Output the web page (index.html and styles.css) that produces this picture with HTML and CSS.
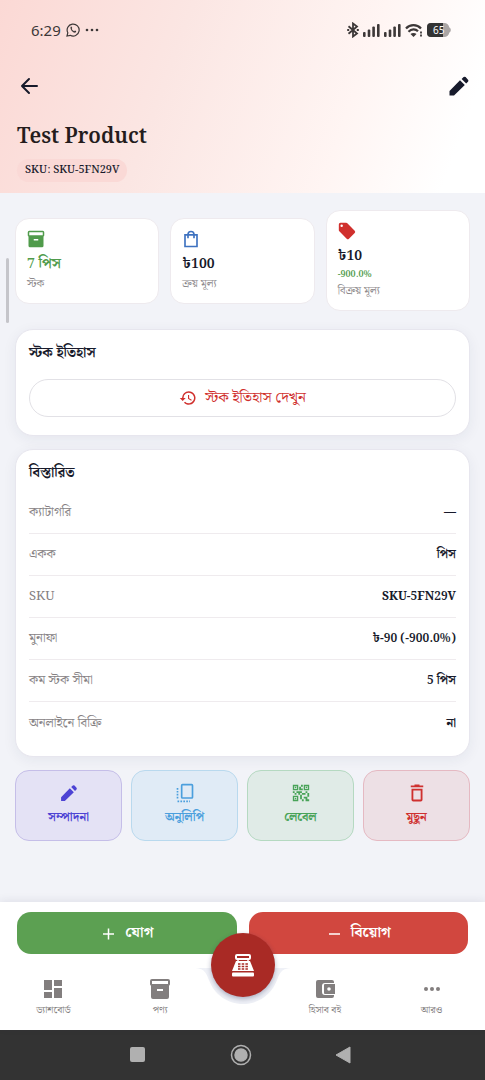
FILE: index.html
```html
<!DOCTYPE html>
<html lang="bn">
<head>
<meta charset="utf-8">
<meta name="viewport" content="width=device-width, initial-scale=1">
<title>Test Product</title>
<link rel="stylesheet" href="styles.css">
</head>
<body>
<div class="screen">
  <header class="header">
    <div class="status">
      <div class="status-group">
        <span class="clock">6:29</span>
        <svg class="i14" viewBox="0 0 14 14" fill="none" stroke="currentColor" stroke-width="1.2"><path d="M1 13l.8-3.2A6 6 0 1 1 4.200 12.300z"/><path d="M4.500 4.200c.2-.8 1.100-.8 1.400 0l.3.8-.5.9c.5 1 1.300 1.800 2.400 2.300l.9-.6 1 .5c.5.6-.2 1.500-1.100 1.600C6.700 9.500 4.300 6.800 4.500 4.200z" fill="currentColor" stroke="none"/></svg>
        <svg class="i14" viewBox="0 0 14 14" fill="currentColor"><circle cx="2" cy="7" r="1.300"/><circle cx="7" cy="7" r="1.300"/><circle cx="12" cy="7" r="1.300"/></svg>
      </div>
      <div class="status-group status-right">
        <svg width="12" height="16" viewBox="0 0 12 16" fill="none" stroke="currentColor" stroke-width="1.800"><path d="M1.500 4.200l8.500 7.300L6 14.500v-13l4 3-8.500 7.300M.2 8h2M9.800 8h2"/></svg>
        <svg width="17" height="14" viewBox="0 0 17 14" fill="currentColor"><rect y="9" width="2.600" height="5" rx="1"/><rect x="4.700" y="6.500" width="2.600" height="7.500" rx="1"/><rect x="9.300" y="3.500" width="2.600" height="10.500" rx="1"/><rect x="14" y="1" width="2.600" height="13" rx="1"/></svg>
        <svg width="17" height="14" viewBox="0 0 17 14" fill="currentColor"><rect y="9" width="2.600" height="5" rx="1"/><rect x="4.700" y="6.500" width="2.600" height="7.500" rx="1"/><rect x="9.300" y="3.500" width="2.600" height="10.500" rx="1"/><rect x="14" y="1" width="2.600" height="13" rx="1"/></svg>
        <svg width="18" height="14" viewBox="0 0 18 14" fill="none" stroke="currentColor" stroke-width="2.200"><path d="M1 5.500c4-4.500 11-4.500 15 0M3.500 8.700c3-3 7-3 9.500-.4"/><path d="M5.500 11c1.500-1.500 4.500-1.500 6 0l-3 3z" fill="currentColor" stroke="none"/><path d="M16 8.500v2M16 11.500v2" stroke-width="1.800"/></svg>
        <svg width="24" height="14" viewBox="0 0 24 14"><path d="M4 0h13c3 0 5 2 5.300 4.500 2 .5 2 4.500 0 5C22 12 20 14 17 14H4a4 4 0 0 1-4-4V4a4 4 0 0 1 4-4z" fill="#aba6a5"/><path d="M4 0h12v14H4a4 4 0 0 1-4-4V4a4 4 0 0 1 4-4z" fill="#333"/><text class="battery" x="6" y="11">65</text></svg>
      </div>
    </div>
    <div class="toolbar">
      <button class="icon-button" aria-label="Back"><svg class="i24" viewBox="0 0 24 24" fill="none" stroke="currentColor" stroke-width="2" stroke-linecap="round" stroke-linejoin="round"><path d="M20 12H5M12 5l-7 7 7 7"/></svg></button>
      <button class="icon-button" aria-label="Edit"><svg class="i24" viewBox="0 0 24 24" fill="currentColor"><path d="M2.500 17V21.500H7L17.800 11 13 6.200zM21 7.700a1.500 1.500 0 0 0 0-2L18.600 3.100a1.500 1.500 0 0 0-2 0L14.600 4.900l4.600 4.600z"/></svg></button>
    </div>
    <h1 class="title">Test Product</h1>
    <span class="sku">SKU: SKU-5FN29V</span>
  </header>

  <main class="content">
    <section class="stats">
      <article class="stat">
        <svg class="i18 green" viewBox="0 0 24 24" fill="currentColor"><path fill-rule="evenodd" d="M3 1h18a2 2 0 0 1 2 2v4a2 2 0 0 1-1 1.700V21a2 2 0 0 1-2 2H4a2 2 0 0 1-2-2V8.700A2 2 0 0 1 1 7V3a2 2 0 0 1 2-2zm0 2v4h18V3zM9 12v2h6v-2z"/></svg>
        <strong class="stat-value green">7 পিস</strong>
        <span class="stat-label">স্টক</span>
      </article>
      <article class="stat">
        <svg class="i18 blue" viewBox="0 0 24 24" fill="none" stroke="currentColor" stroke-width="2.200"><path d="M4 6.500h16V22H4zM8 11V6a4 4 0 0 1 8 0v5"/></svg>
        <strong class="stat-value">৳100</strong>
        <span class="stat-label">ক্রয় মূল্য</span>
      </article>
      <article class="stat">
        <svg class="i18 red" viewBox="1 1 22 22" fill="currentColor"><path d="M21.400 11.600l-9-9A2 2 0 0 0 11 2H4a2 2 0 0 0-2 2v7c0 .5.200 1 .600 1.400l9 9a2 2 0 0 0 2.800 0l7-7a2 2 0 0 0 0-2.800zM5.500 7a1.500 1.500 0 1 1 0-3 1.500 1.500 0 0 1 0 3z"/></svg>
        <strong class="stat-value">৳10</strong>
        <span class="stat-change">-900.0%</span>
        <span class="stat-label">বিক্রয় মূল্য</span>
      </article>
    </section>

    <section class="card">
      <h2 class="card-title">স্টক ইতিহাস</h2>
      <button class="history"><svg class="i18" viewBox="0 0 24 24" fill="currentColor"><path d="M13 3a9 9 0 0 0-9 9H1l3.900 3.900L9 12H6a7 7 0 1 1 2.060 4.940l-1.420 1.420A9 9 0 1 0 13 3zm-1 5v5l4.280 2.540.720-1.210-3.500-2.080V8z"/></svg><span>স্টক ইতিহাস দেখুন</span></button>
    </section>

    <section class="card card-details">
      <h2 class="card-title">বিস্তারিত</h2>
      <dl class="details">
        <div class="row"><dt>ক্যাটাগরি</dt><dd>—</dd></div>
        <div class="row"><dt>একক</dt><dd>পিস</dd></div>
        <div class="row"><dt>SKU</dt><dd>SKU-5FN29V</dd></div>
        <div class="row"><dt>মুনাফা</dt><dd>৳-90 (-900.0%)</dd></div>
        <div class="row"><dt>কম স্টক সীমা</dt><dd>5 পিস</dd></div>
        <div class="row"><dt>অনলাইনে বিক্রি</dt><dd>না</dd></div>
      </dl>
    </section>

    <section class="actions">
      <button class="action edit"><svg class="i20" viewBox="0 0 24 24" fill="currentColor"><path d="M2.500 17V21.500H7L17.800 11 13 6.200zM21 7.700a1.500 1.500 0 0 0 0-2L18.600 3.100a1.500 1.500 0 0 0-2 0L14.600 4.900l4.600 4.600z"/></svg>সম্পাদনা</button>
      <button class="action copy"><svg class="i20" viewBox="0 0 24 24" fill="none" stroke="currentColor" stroke-width="2"><rect x="8" y="2" width="13" height="16" rx="1"/><path d="M3 6v14M3 22h15" stroke-dasharray="2 1.500"/></svg>অনুলিপি</button>
      <button class="action label"><svg class="i20" viewBox="1 1 22 22" fill="currentColor"><path d="M15 21h-2v-2h2v2zm-2-7h-2v5h2v-5zm8-2h-2v4h2v-4zm-2-2h-2v2h2v-2zM7 12H5v2h2v-2zm-2-2H3v2h2v-2zm7-5h2V3h-2v2zm-7.500-.5v3h3v-3h-3zM9 9H3V3h6v6zm-4.500 7.500v3h3v-3h-3zM9 21H3v-6h6v6zm7.500-16.500v3h3v-3h-3zM21 9h-6V3h6v6zm-2 10v-3h-4v2h2v3h4v-2h-2zm-2-7h-4v2h4v-2zm-4-2H7v2h2v2h2v-2h2v-2zm1-1V7h-2V5h-2v4h4zM6.750 5.250h-1.500v1.500h1.500v-1.500zm0 12h-1.500v1.500h1.500v-1.500zm12-12h-1.500v1.500h1.500v-1.500z"/></svg>লেবেল</button>
      <button class="action delete"><svg class="i20" viewBox="0 0 24 24" fill="none" stroke="currentColor" stroke-width="2.200"><path d="M6.500 8h11v12a1 1 0 0 1-1 1h-9a1 1 0 0 1-1-1zM4.500 4h15M9 3h6"/></svg>মুছুন</button>
    </section>
    <div class="scrollbar"></div>
  </main>

  <footer class="bottom">
    <div class="stock-buttons">
      <button class="stock add"><svg class="i16" viewBox="0 0 16 16" fill="none" stroke="currentColor" stroke-width="1.500"><path d="M3 9h11M8.500 3.500v11"/></svg>যোগ</button>
      <button class="stock remove"><svg class="i16" viewBox="0 0 16 16" fill="none" stroke="currentColor" stroke-width="1.500"><path d="M3 9h11"/></svg>বিয়োগ</button>
    </div>
    <nav class="tabs">
      <a class="tab" href="#dashboard"><svg class="i24" viewBox="0 0 24 24" fill="currentColor"><path d="M3 13h8V3H3zM3 21h8v-6H3zM13 21h8V11h-8zM13 3v6h8V3z"/></svg>ড্যাশবোর্ড</a>
      <a class="tab" href="#products"><svg class="i24" viewBox="0 0 24 24" fill="currentColor"><path fill-rule="evenodd" d="M4 2h16a2 2 0 0 1 2 2v3a2 2 0 0 1-1 1.700V20a2 2 0 0 1-2 2H5a2 2 0 0 1-2-2V8.700A2 2 0 0 1 2 7V4a2 2 0 0 1 2-2zm0 2v3h16V4zM9 12v2h6v-2z"/></svg>পণ্য</a>
      <span></span>
      <a class="tab" href="#ledger"><svg class="i24" viewBox="0 0 24 24" fill="currentColor"><path fill-rule="evenodd" d="M5 3h14a2 2 0 0 1 2 2v1h-9a3 3 0 0 0-3 3v6a3 3 0 0 0 3 3h9v1a2 2 0 0 1-2 2H5a2 2 0 0 1-2-2V5a2 2 0 0 1 2-2zM12 7h10v10H12a1 1 0 0 1-1-1V8a1 1 0 0 1 1-1zm4 3.200a1.800 1.800 0 1 0 0 3.600 1.800 1.800 0 0 0 0-3.600z"/></svg>হিসাব বই</a>
      <a class="tab" href="#more"><svg class="i24" viewBox="0 0 24 24" fill="currentColor"><circle cx="6" cy="12" r="2"/><circle cx="12" cy="12" r="2"/><circle cx="18" cy="12" r="2"/></svg>আরও</a>
    </nav>
    <svg class="notch" viewBox="0 0 100 42"><path d="M0 4c12 0 13 5 16 12 5 14 18 24 34 24s29-10 34-24c3-7 4-12 16-12z"/></svg>
    <button class="fab" aria-label="POS"><svg class="i28" viewBox="0 0 28 28" fill="none" stroke="currentColor" stroke-width="2"><rect x="7" y="4" width="14" height="4" rx="1"/><path d="M9 8v3M19 8v3" stroke-width="1.500"/><path d="M7 10h14l4 10H3z" fill="currentColor" stroke="none"/><path d="M9 13h10M9 15.500h10M9 18h10" stroke="#a92a25" stroke-width="1.500" stroke-dasharray="2.500 1.200"/><rect x="3" y="21.500" width="22" height="4" rx="1" fill="currentColor" stroke="none"/></svg></button>
  </footer>

  <div class="system">
    <button class="system-button" aria-label="Recents"><svg class="i24" viewBox="0 0 24 24" fill="currentColor"><rect x="4" y="4" width="15" height="15" rx="2"/></svg></button>
    <button class="system-button" aria-label="Home"><svg class="i24" viewBox="0 0 24 24" fill="none" stroke="currentColor" stroke-width="1.500"><circle cx="12" cy="12" r="9.500"/><circle cx="12" cy="12" r="6" fill="currentColor"/></svg></button>
    <button class="system-button" aria-label="Back"><svg class="i24" viewBox="0 0 24 24" fill="currentColor"><path d="M4 12L18 4v16z" stroke="currentColor" stroke-linejoin="round"/></svg></button>
  </div>
</div>
</body>
</html>
```
FILE: styles.css
```css
* { box-sizing: border-box; }
body {
  margin: 0;
  background: #f2f3f8;
  color: #171a2b;
  font-family: "Noto Serif Bengali", "Noto Serif", "DejaVu Serif Condensed", "Liberation Serif", serif;
}
button { font: inherit; color: inherit; border: 0; padding: 0; background: none; }
h1, h2, dl, dd { margin: 0; }
svg { display: block; flex: none; }
.i14 { width: 14px; height: 14px; }
.i16 { width: 16px; height: 16px; }
.i18 { width: 18px; height: 18px; }
.i20 { width: 20px; height: 20px; }
.i24 { width: 24px; height: 24px; }
.i28 { width: 28px; height: 28px; }
.green { color: #509b4b; }
.blue { color: #3e72c0; }
.red { color: #d0302d; }
.screen { min-height: 100vh; display: flex; flex-direction: column; }

.header {
  padding: 20px 17px 11px;
  background: linear-gradient(110deg, #fbd9d5 0%, #fbe6e3 35%, #fff5f3 70%, #ffffff 92%);
}
.status { display: flex; justify-content: space-between; height: 20px; padding: 0 17px 0 14px; color: #3d3838; }
.status-group { display: flex; align-items: center; gap: 5px; }
.status-right { gap: 4px; }
.clock { font: 15px/18px "Noto Sans", sans-serif; }
.battery { font: 10px "Noto Sans", sans-serif; fill: #ffffff; }
.toolbar { display: flex; justify-content: space-between; margin: 34px -3px 0 0; }
.icon-button { height: 24px; }
.title { margin-top: 22px; font-size: 21px; line-height: 34px; font-weight: 600; color: #241c1c; }
.sku {
  display: inline-block;
  margin-top: 5px;
  padding: 0 8px;
  border-radius: 12px;
  background: #fad9d6;
  font-size: 11px;
  line-height: 23px;
  font-weight: 500;
}

.content { position: relative; flex: 1; display: flex; flex-direction: column; gap: 13px; padding: 17px 15px; }
.stats { display: grid; grid-template-columns: repeat(3, 1fr); gap: 11px; align-items: center; margin-bottom: 5px; }
.stat {
  display: flex;
  flex-direction: column;
  padding: 11px 11px 9px;
  border: 1px solid #eeeaee;
  border-radius: 14px;
  background: #ffffff;
}
.stat-value { margin-top: 5px; font-size: 14px; line-height: 22px; font-weight: 700; }
.stat-change { font-size: 9px; line-height: 15px; font-weight: 700; color: #509b4b; }
.stat-label { font-size: 11px; line-height: 19px; color: #8d898b; }
.card {
  padding: 12px 13px 13px;
  border: 1px solid #e7e6ee;
  border-radius: 18px;
  background: #ffffff;
  box-shadow: 0 3px 14px #20285010;
}
.card-details { padding-bottom: 12px; }
.card-title { font-size: 14px; line-height: 22px; font-weight: 700; }
.history {
  width: 100%;
  height: 38px;
  margin: 15px 0 5px;
  display: flex;
  justify-content: center;
  align-items: center;
  gap: 8px;
  border: 1px solid #e2e1e6;
  border-radius: 19px;
  color: #d0302d;
  font-size: 15px;
}
.details { margin-top: 8px; }
.row {
  display: flex;
  justify-content: space-between;
  align-items: center;
  height: 42px;
  border-bottom: 1px solid #efebee;
  font-size: 13px;
}
.row:last-child { border-bottom: 0; }
.row dt { color: #858183; }
.row dd { font-size: 12px; font-weight: 700; }
.actions { display: grid; grid-template-columns: repeat(4, 1fr); gap: 9px; }
.action {
  height: 71px;
  display: flex;
  flex-direction: column;
  align-items: center;
  justify-content: center;
  gap: 5px;
  border: 1px solid;
  border-radius: 14px;
  font-size: 12px;
  line-height: 20px;
  font-weight: 700;
}
.edit { color: #4d43d4; background: #e4e2f5; border-color: #c5bee8; }
.copy { color: #4b9fdd; background: #e0ebf6; border-color: #b9d9ee; }
.label { color: #48a358; background: #e0ebe7; border-color: #b5d9c1; }
.delete { color: #cf302f; background: #ede0e5; border-color: #e5b9c2; }
.scrollbar { position: absolute; left: 6px; top: 65px; width: 3px; height: 65px; border-radius: 2px; background: #c5c5ca; }

.bottom { position: relative; padding: 10px 0 0; background: #ffffff; box-shadow: 0 -2px 8px #20285014; }
.stock-buttons { display: grid; grid-template-columns: 1fr 1fr; gap: 12px; padding: 0 17px; }
.stock {
  height: 42px;
  display: flex;
  align-items: center;
  justify-content: center;
  gap: 9px;
  border-radius: 14px;
  color: #ffffff;
  font-size: 15px;
  font-weight: 700;
}
.add { background: #5ca052; }
.remove { background: #d1473f; }
.tabs { display: grid; grid-template-columns: 1fr 1fr 58px 1fr 1fr; height: 76px; padding-top: 23px; }
.tab {
  display: flex;
  flex-direction: column;
  align-items: center;
  gap: 1px;
  color: #827e7e;
  font-size: 10px;
  line-height: 16px;
  text-decoration: none;
}
.notch { position: absolute; left: 50%; top: 62px; width: 100px; height: 42px; margin-left: -50px; fill: #eff1f7; }
.fab {
  position: absolute;
  left: 50%;
  top: 31px;
  width: 64px;
  height: 64px;
  margin-left: -32px;
  display: grid;
  place-items: center;
  border-radius: 50%;
  background: #a92a25;
  color: #ffffff;
  box-shadow: 0 2px 5px #20285055;
}
.system { display: flex; justify-content: center; align-items: center; gap: 79px; height: 50px; padding-right: 4px; background: #333333; color: #b0b0b0; }
.system-button { width: 24px; height: 24px; }
```
